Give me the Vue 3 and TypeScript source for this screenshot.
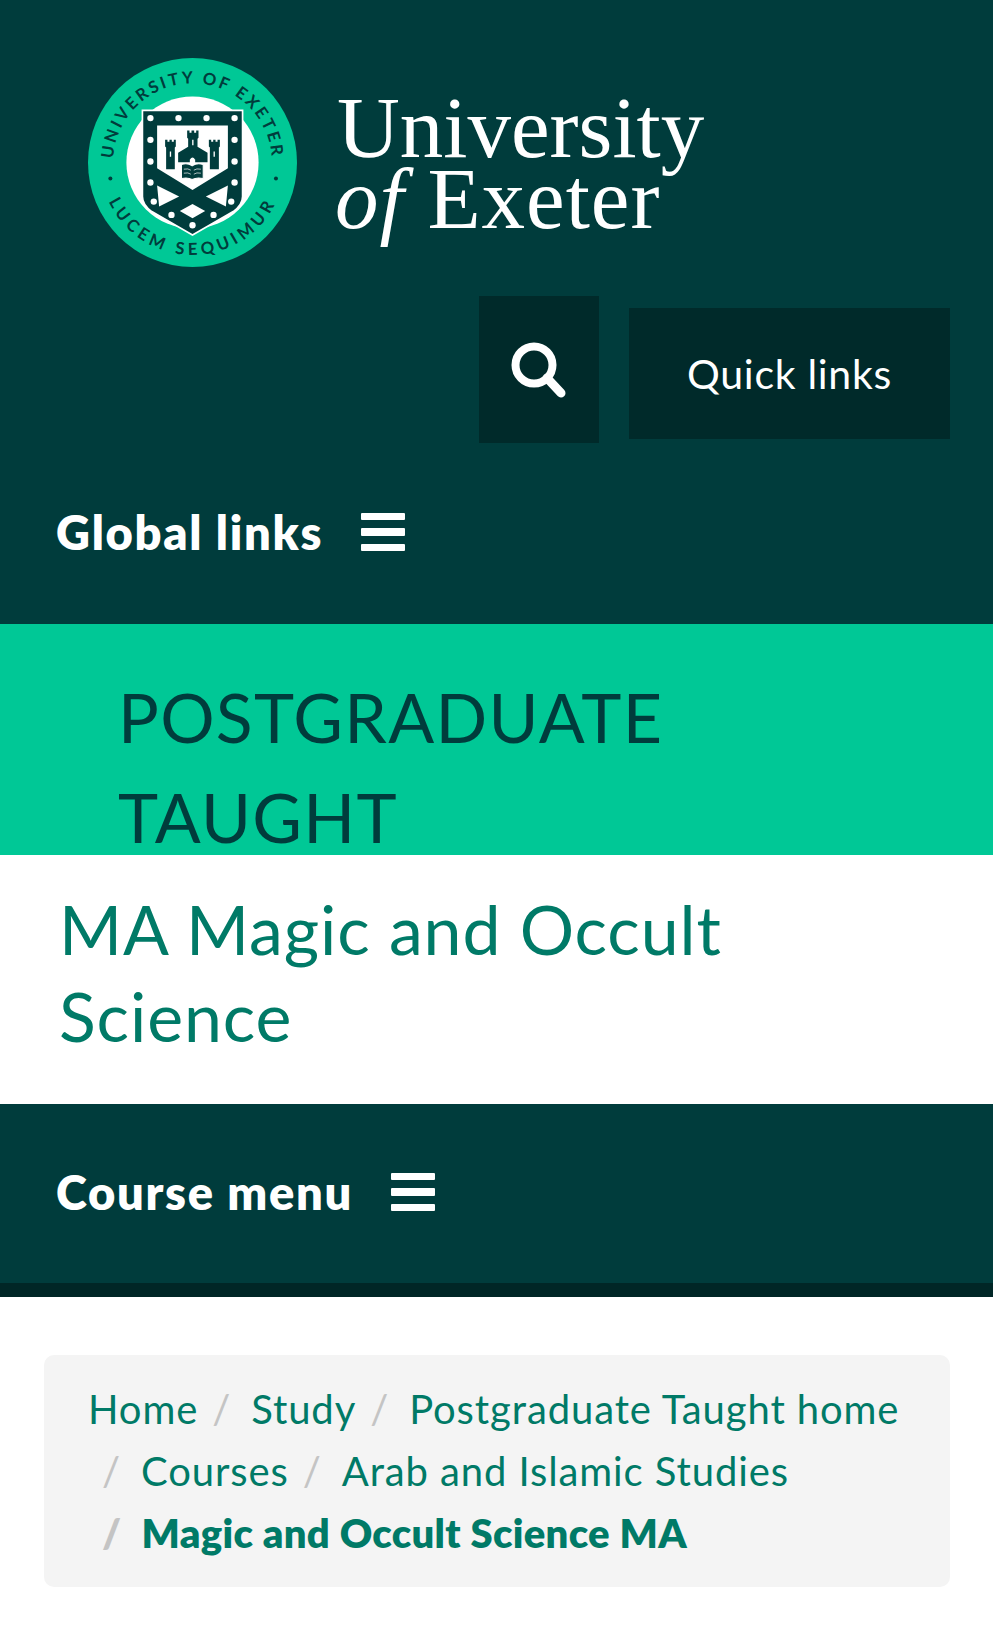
<script setup lang="ts">
interface Crumb {
  label: string
  current?: boolean
}

const crumbs: Crumb[] = [
  { label: 'Home' },
  { label: 'Study' },
  { label: 'Postgraduate Taught home' },
  { label: 'Courses' },
  { label: 'Arab and Islamic Studies' },
  { label: 'Magic and Occult Science MA', current: true },
]

const dots: [number, number][] = [
  [242, 235], [326, 235], [410, 235], [494, 235],
  [242, 300], [494, 300], [242, 365], [494, 365],
  [242, 428], [494, 428], [252, 485], [484, 485],
  [305, 525], [431, 525], [368, 556],
]
</script>

<template>
  <div class="page">
    <header class="masthead">
      <div class="brand">
        <svg class="crest" viewBox="55 55 626 626" width="209" height="209" role="img" aria-label="University of Exeter crest">
          <defs>
            <path id="arc-top" d="M138 430a238 238 0 1 1 460 0" />
            <path id="arc-bottom" d="M91 368a277 277 0 0 0 554 0" />
          </defs>
          <circle cx="368" cy="368" r="313" fill="#00c896" />
          <circle cx="368" cy="368" r="198" fill="#fff" />
          <text class="crest-text">
            <textPath href="#arc-top" startOffset="50%" text-anchor="middle">UNIVERSITY OF EXETER</textPath>
          </text>
          <text class="crest-text wide">
            <textPath href="#arc-bottom" startOffset="50%" text-anchor="middle">LUCEM SEQUIMUR</textPath>
          </text>
          <circle cx="122" cy="416" r="6" fill="#003c3c" />
          <circle cx="618" cy="416" r="6" fill="#003c3c" />
          <path d="M218 212H518V470Q518 495 490 515L368 585L246 515Q218 495 218 470Z" fill="#003c3c" stroke="#fff" stroke-width="5" />
          <path d="M262 257H474V385L368 450L262 385Z" fill="#fff" />
          <path d="M262 437L328 470L268 500Z M474 437L408 470L468 500Z M330 513L368 492L406 513L368 535Z" fill="#fff" />
          <circle v-for="(d, i) in dots" :key="i" :cx="d[0]" :cy="d[1]" r="9.5" fill="#fff" />
          <g fill="#003c3c">
            <path d="M352 272h7v7h6v-7h8v7h6v-7h7v22l-3 3v24l30 18v28h-88v-28l30-18v-24l-3-3Z" />
            <path d="M286 300h7v6h6v-6h7v6h6v-6h6v20l-3 3v65h-26v-65l-3-3Z" />
            <path d="M417 300h7v6h6v-6h7v6h6v-6h7v20l-3 3v65h-27v-65l-3-3Z" />
            <path d="M335 374q18-6 32 4q14-10 33 -4v42q-19-5-33 3q-14-8-32-3Z" stroke="#fff" stroke-width="3" />
          </g>
          <g stroke="#fff" stroke-width="2" fill="none">
            <path d="M342 388q13-3 21 3M342 400q13-3 21 3M393 388q-13-3-21 3M393 400q-13-3-21 3" />
            <path d="M369 300v16M302 335v16M433 335v16" stroke-width="4" />
          </g>
          <path d="M360 360q8-14 16 0v14h-16Z" fill="#fff" />
        </svg>
        <div class="wordmark">
          <span>University</span>
          <span class="second"><em>of</em> Exeter</span>
        </div>
      </div>

      <div class="actions">
        <button class="search-btn" aria-label="Search">
          <svg viewBox="0 0 60 60" width="60" height="60">
            <circle cx="25" cy="25" r="18.5" fill="none" stroke="#fff" stroke-width="8" />
            <path d="M38 38L52 53" stroke="#fff" stroke-width="9" stroke-linecap="round" />
          </svg>
        </button>
        <button class="quick-btn">Quick links</button>
      </div>

      <button class="menu-toggle global">
        Global links
        <span class="bars"><i></i><i></i><i></i></span>
      </button>
    </header>

    <section class="band">
      <div class="band-title">POSTGRADUATE TAUGHT</div>
    </section>

    <section class="course">
      <h1>MA Magic and Occult Science</h1>
    </section>

    <nav class="course-nav">
      <button class="menu-toggle">
        Course menu
        <span class="bars"><i></i><i></i><i></i></span>
      </button>
    </nav>

    <main class="content">
      <ol class="breadcrumb">
        <li v-for="c in crumbs" :key="c.label" :class="{ current: c.current }">{{ c.label }}</li>
      </ol>
    </main>
  </div>
</template>

<style>
html, body {
  margin: 0;
  background: #fff;
}
</style>

<style scoped>
.page {
  width: 993px;
  min-height: 1649px;
  font-family: "Lato", "Noto Sans", sans-serif;
  background: #fff;
}
button {
  font-family: inherit;
  border: none;
  padding: 0;
  color: #fff;
  background: none;
}
.masthead {
  height: 624px;
  box-sizing: border-box;
  padding-top: 58px;
  background: #003c3c;
}
.brand {
  display: flex;
  align-items: flex-start;
  gap: 40px;
  padding-left: 88px;
  height: 238px;
}
.crest {
  flex-shrink: 0;
}
.crest-text {
  font-family: "Lato", sans-serif;
  font-size: 50px;
  font-weight: 700;
  letter-spacing: 8px;
  fill: #003c3c;
}
.crest-text.wide {
  letter-spacing: 13px;
}
.wordmark {
  display: flex;
  flex-direction: column;
  margin-top: 34px;
  font-family: "Liberation Serif", serif;
  font-size: 87px;
  line-height: 71px;
  color: #fff;
}
.wordmark em {
  font-style: italic;
}
.wordmark .second {
  margin-left: -2px;
  letter-spacing: 1px;
}
.actions {
  display: flex;
  justify-content: flex-end;
  align-items: flex-start;
  gap: 30px;
  padding-right: 43px;
}
.search-btn {
  width: 120px;
  height: 147px;
  display: flex;
  align-items: center;
  justify-content: center;
  background: #002a2a;
}
.quick-btn {
  width: 321px;
  height: 131px;
  margin-top: 12px;
  font-size: 41px;
  letter-spacing: 0.7px;
  background: #002a2a;
}
.menu-toggle {
  display: flex;
  align-items: center;
  gap: 38px;
  font-size: 47px;
  font-weight: 800;
  letter-spacing: 1.7px;
  line-height: 56px;
}
.global {
  margin: 61px 0 0 56px;
}
.bars {
  display: flex;
  flex-direction: column;
  gap: 8px;
  width: 44px;
}
.bars i {
  display: block;
  height: 7.5px;
  border-radius: 1px;
  background: #fff;
}
.band {
  height: 231px;
  box-sizing: border-box;
  overflow: hidden;
  padding: 43px 200px 0 118px;
  background: #00c896;
}
.band-title {
  font-size: 68px;
  letter-spacing: 1.3px;
  line-height: 100px;
  color: #003c3c;
}
.course {
  height: 249px;
  box-sizing: border-box;
  padding: 30px 200px 0 59px;
}
.course h1 {
  margin: 0;
  font-size: 68px;
  font-weight: 400;
  letter-spacing: 0.9px;
  line-height: 87px;
  color: #007a67;
}
.course-nav {
  height: 193px;
  box-sizing: border-box;
  padding-top: 60px;
  background: #003c3c;
  border-bottom: 14px solid #002626;
}
.course-nav .menu-toggle {
  margin-left: 56px;
}
.content {
  padding: 58px 43px 0 44px;
}
.breadcrumb {
  display: flex;
  flex-wrap: wrap;
  margin: 0;
  padding: 23px 44px 23px 44px;
  list-style: none;
  border-radius: 10px;
  background: #f4f4f4;
  font-size: 40px;
  letter-spacing: 0.9px;
  line-height: 62px;
  color: #007a67;
}
.breadcrumb li + li {
  padding-left: 14px;
}
.breadcrumb li + li::before {
  content: "/";
  padding-right: 20px;
  color: #c4c4c4;
}
.breadcrumb .current {
  font-weight: 800;
  letter-spacing: 0.3px;
}
</style>
